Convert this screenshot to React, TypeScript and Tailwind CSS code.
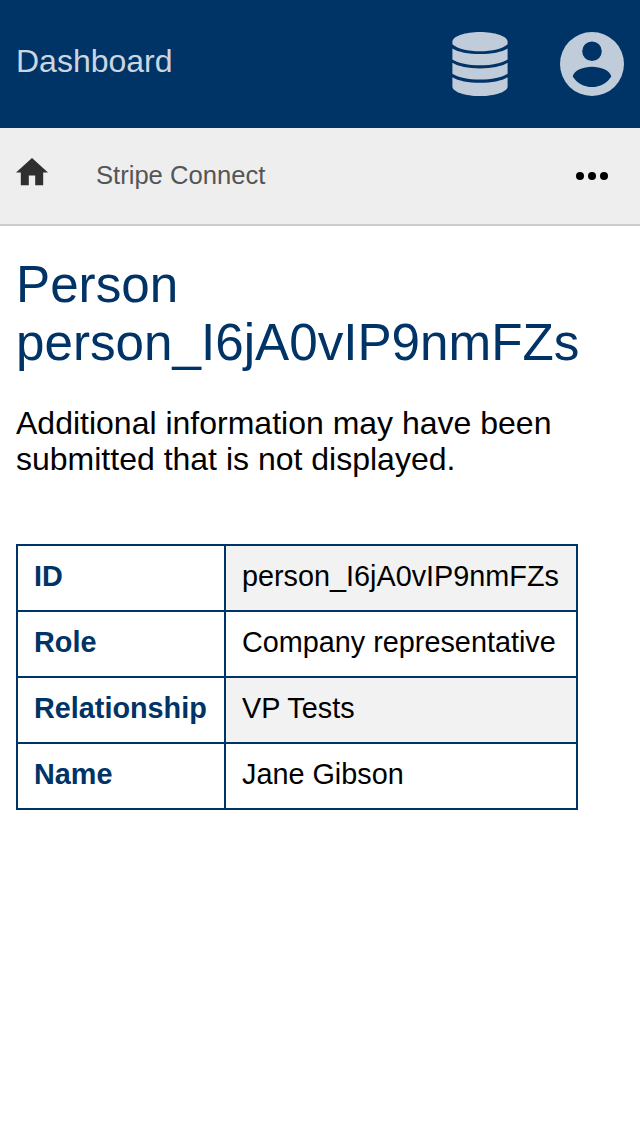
const rows = [
  ["ID", "person_I6jA0vIP9nmFZs"],
  ["Role", "Company representative"],
  ["Relationship", "VP Tests"],
  ["Name", "Jane Gibson"],
];

function DatabaseIcon() {
  return (
    <svg className="h-16 w-14" viewBox="0 0 56 64" fill="currentColor" aria-hidden="true">
      <path d="M28 0C42.5 0 55.6 4.2 55.6 9.6V12.2C51 16.8 40 19.2 28 19.2S5 16.8.4 12.2V9.6C.4 4.2 13.5 0 28 0Z" />
      <path d="M.4 16.4C6 20 16.5 22 28 22S50 20 55.6 16.4V27.4C50 31 39.5 33.2 28 33.2S6 31 .4 27.4Z" />
      <path d="M.4 30.8C6 34.4 16.5 36.4 28 36.4S50 34.4 55.6 30.8V41.8C50 45.4 39.5 47.6 28 47.6S6 45.4.4 41.8Z" />
      <path d="M.4 45.2C6 48.8 16.5 50.8 28 50.8S50 48.8 55.6 45.2V54.4C55.6 59.8 42.5 64 28 64S.4 59.8.4 54.4Z" />
    </svg>
  );
}

function AccountIcon() {
  return (
    <svg className="h-16 w-16" viewBox="0 0 64 64" fill="currentColor" aria-hidden="true">
      <path
        fillRule="evenodd"
        d="M32 0a32 32 0 1 1 0 64a32 32 0 1 1 0-64ZM32 9.5a9.8 9.8 0 1 0 0 19.6a9.8 9.8 0 1 0 0-19.6ZM12.7 44.4C16.8 51 23.9 55 32 55S47.2 51 51.3 44.4C49.8 38.2 40.6 34.8 32 34.8S14.2 38.2 12.7 44.4Z"
      />
    </svg>
  );
}

export default function App() {
  return (
    <div className="min-h-screen bg-white font-['Liberation_Sans',Arial,sans-serif] text-black">
      <header className="flex h-32 items-center bg-[#003366] px-4 text-[#c0ccd9]">
        <span className="mr-auto pb-1.5 text-[32px] leading-9 text-[#ccd6e0]">Dashboard</span>
        <span className="mr-[52px]"><DatabaseIcon /></span>
        <AccountIcon />
      </header>
      <nav className="flex h-[98px] items-center border-b-2 border-[#cccccc] bg-[#eeeeee] px-4">
        <svg className="mb-2 h-[27.2px] w-8 text-[#2f2f2f]" viewBox="2 3 20 17" fill="currentColor" aria-hidden="true">
          <path d="M10 20v-6h4v6h5v-8h3L12 3 2 12h3v8z" />
        </svg>
        <span className="ml-12 pb-0.5 text-[25.6px] leading-8 text-[#555555]">Stripe Connect</span>
        <svg className="ml-auto mr-4 h-2 w-8" viewBox="0 0 32 8" aria-hidden="true">
          <circle cx="4" cy="4" r="4" />
          <circle cx="16" cy="4" r="4" />
          <circle cx="28" cy="4" r="4" />
        </svg>
      </nav>
      <main className="px-4 pt-[30px]">
        <h1 className="text-[51.2px] leading-[58px] text-[#003366]">Person person_I6jA0vIP9nmFZs</h1>
        <p className="mt-[33px] text-[32px] leading-9">Additional information may have been submitted that is not displayed.</p>
        <table className="mt-[67px] w-[562px] border-collapse text-left text-[28.8px] leading-8">
          <tbody>
            {rows.map(([label, value]) => (
              <tr key={label} className="h-[66px] odd:bg-[#f2f2f2]">
                <th className="w-[208px] border-2 border-[#003366] bg-white px-4 pt-0 pb-1 font-bold text-[#003366]">{label}</th>
                <td className="border-2 border-[#003366] px-4 pt-0 pb-1">{value}</td>
              </tr>
            ))}
          </tbody>
        </table>
      </main>
    </div>
  );
}
